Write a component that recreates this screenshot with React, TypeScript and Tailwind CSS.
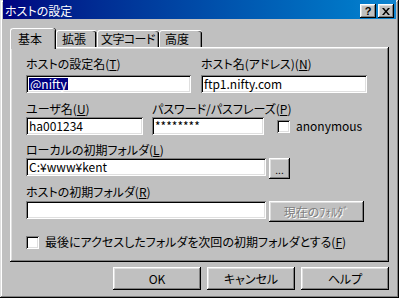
import React from "react";

const raised =
  "bg-[#c0c0c0] shadow-[inset_-1px_-1px_#000000,inset_1px_1px_#ffffff,inset_-2px_-2px_#808080,inset_2px_2px_#dfdfdf]";
const sunken =
  "bg-white shadow-[inset_1px_1px_#808080,inset_-1px_-1px_#ffffff,inset_2px_2px_#000000,inset_-2px_-2px_#dfdfdf]";

function Label({ text, k }: { text: string; k: string }) {
  return (
    <div className="h-[16px] leading-[16px] whitespace-nowrap">
      {text}(<span className="underline underline-offset-[1px]">{k}</span>)
    </div>
  );
}

function Input({ w, children }: { w: string; children?: React.ReactNode }) {
  return (
    <div className={`${sunken} ${w} h-[18px] pl-[3px] flex items-center leading-[14px] whitespace-nowrap overflow-hidden`}>
      {children}
    </div>
  );
}

function Check() {
  return <div className={`${sunken} w-[13px] h-[13px] shrink-0`} />;
}

export default function App() {
  return (
    <div className="w-[399px] h-[298px] bg-[#c0c0c0] px-[3px] flex flex-col text-[12px] text-black font-['Noto_Sans_CJK_JP',sans-serif] [font-feature-settings:'palt'] shadow-[inset_-1px_-1px_#000000,inset_1px_1px_#dfdfdf,inset_-2px_-2px_#808080,inset_2px_2px_#ffffff]">
      {/* Title bar */}
      <div className="h-[19px] pt-[3px] pl-[2px] pr-[2px] flex items-center bg-gradient-to-r from-[#000080] to-[#1084d0]">
        <div className="flex-1 text-white leading-[16px]">ホストの設定</div>
        <div className={`${raised} w-[16px] h-[14px] flex items-center justify-center font-bold text-[11px] leading-none font-['Liberation_Sans',sans-serif]`}>
          ?
        </div>
        <div className={`${raised} ml-[2px] w-[16px] h-[14px] flex items-center justify-center`}>
          <svg width="8" height="7" viewBox="0 0 8 7">
            <path d="M0 0h2l2 2.5L6 0h2L5 3.5 8 7H6L4 4.5 2 7H0l3-3.5z" fill="#000" />
          </svg>
        </div>
      </div>

      {/* Tabs */}
      <div className="mt-[8px] ml-[7px] h-[20px] flex items-end whitespace-nowrap">
        <div className="relative z-10 w-[45px] h-[21px] mb-[-2px] bg-[#c0c0c0] border-l border-t border-white rounded-tl-[3px] rounded-tr-[3px] shadow-[inset_-1px_0_#808080,1px_0_#000000] pl-[7px] pt-[2px] leading-[16px]">
          基本
        </div>
        <div className="w-[41px] h-[17px] ml-[1px] border-l border-t border-white rounded-tl-[3px] rounded-tr-[3px] shadow-[inset_-1px_0_#808080,inset_-2px_0_#000000] pl-[5px] leading-[16px]">
          拡張
        </div>
        <div className="w-[62px] h-[17px] border-l border-t border-white rounded-tl-[3px] rounded-tr-[3px] shadow-[inset_-1px_0_#000000,inset_-2px_0_#808080] pl-[3px] leading-[16px] tracking-[-0.6px]">
          文字コード
        </div>
        <div className="w-[43px] h-[17px] border-l border-t border-white rounded-tl-[3px] rounded-tr-[3px] shadow-[inset_-1px_0_#000000,inset_-2px_0_#808080] pl-[5px] leading-[16px]">
          高度
        </div>
      </div>

      {/* Panel */}
      <div className="ml-[7px] w-[379px] h-[215px] shadow-[inset_-1px_-1px_#000000,inset_1px_1px_#ffffff,inset_-2px_-2px_#808080,inset_2px_2px_#dfdfdf] pl-[16px] pt-[9px] flex flex-col">
        <div className="flex gap-[10px]">
          <div className="flex flex-col">
            <Label text="ホストの設定名" k="T" />
            <div className="mt-[3px]">
              <Input w="w-[165px]">
                <span className="bg-[#000080] text-white px-[1px] leading-[12px]">@nifty</span>
              </Input>
            </div>
          </div>
          <div className="flex flex-col">
            <Label text="ホスト名(アドレス)" k="N" />
            <div className="mt-[3px]">
              <Input w="w-[166px]">ftp1.nifty.com</Input>
            </div>
          </div>
        </div>

        <div className="mt-[8px] flex">
          <div className="flex flex-col">
            <Label text="ユーザ名" k="U" />
            <Input w="w-[117px]">ha001234</Input>
          </div>
          <div className="ml-[9px] flex flex-col">
            <Label text="パスワード/パスフレーズ" k="P" />
            <div className="flex items-center">
              <Input w="w-[112px]">********</Input>
              <div className="ml-[13px] flex items-center gap-[6px]">
                <Check />
                <span className="leading-[14px]">anonymous</span>
              </div>
            </div>
          </div>
        </div>

        <div className="mt-[7px]">
          <Label text="ローカルの初期フォルダ" k="L" />
          <div className="flex items-start gap-[3px]">
            <Input w="w-[240px]">C:¥www¥kent</Input>
            <div className={`${raised} w-[21px] h-[21px] flex items-end justify-center pb-[4px] text-[10px] leading-[10px]`}>
              ...
            </div>
          </div>
        </div>

        <div className="mt-[5px]">
          <Label text="ホストの初期フォルダ" k="R" />
          <div className="mt-[1px] flex items-start gap-[3px]">
            <Input w="w-[240px]" />
            <div className={`${raised} w-[95px] h-[21px] flex items-center justify-center text-[#808080] [text-shadow:1px_1px_#ffffff] leading-[14px]`}>
              現在のﾌｫﾙﾀﾞ
            </div>
          </div>
        </div>

        <div className="mt-[13px] flex items-center gap-[6px]">
          <Check />
          <span className="leading-[14px] whitespace-nowrap">
            最後にアクセスしたフォルダを次回の初期フォルダとする(<span className="underline underline-offset-[1px]">F</span>)
          </span>
        </div>
      </div>

      {/* Buttons */}
      <div className="mt-[5px] mr-[7px] flex justify-end gap-[6px]">
        <div className={`${raised} w-[88px] h-[23px] flex items-center justify-center leading-[14px]`}>OK</div>
        <div className={`${raised} w-[88px] h-[23px] flex items-center justify-center leading-[14px]`}>キャンセル</div>
        <div className={`${raised} w-[88px] h-[23px] flex items-center justify-center leading-[14px]`}>ヘルプ</div>
      </div>
    </div>
  );
}
